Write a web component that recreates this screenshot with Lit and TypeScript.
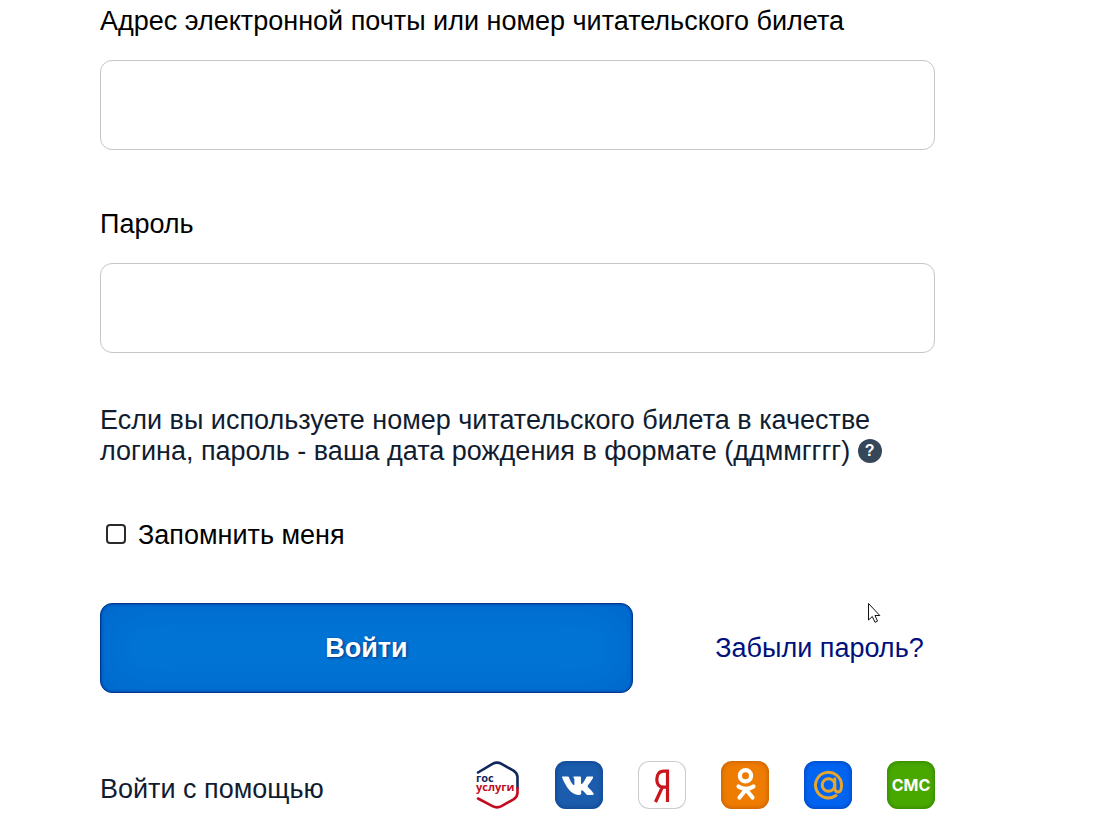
import { LitElement, html, css, svg } from "lit";
import { customElement } from "lit/decorators.js";

const providers = [
  {
    name: "Госуслуги",
    tone: "plain",
    mark: svg`
      <g fill="none" stroke-width="2.6" stroke-linecap="round" stroke-linejoin="round">
        <path stroke="#10265c" d="M6 11.5 L20.5 2.8 Q25 .5 29.5 2.8 L41.5 9.7 Q45.3 12 45.5 16 V27"/>
        <path stroke="#c40b1e" d="M45.5 27 V32 Q45.3 36 41.5 38.3 L29.5 45.2 Q25 47.5 20.5 45.2 L6 37.5"/>
      </g>
      <text class="gos-text" x="4" y="21" fill="#10265c">гос</text>
      <text class="gos-text" x="4" y="30" fill="#c40b1e">услуги</text>`,
  },
  {
    name: "ВКонтакте",
    tone: "vk",
    mark: svg`<path fill="#fff" d="M7.5 15.5h5.2c.7 0 1 .3 1.3 1.100 1.500 4 3.800 7.500 4.800 7.500.4 0 .6-.2.6-1.200v-4.200c-.1-1.900-1.200-2.100-1.200-2.700 0-.3.3-.6.700-.6h6.200c.6 0 .9.300.9 1v5.700c0 .6.300.9.500.9.400 0 .7-.3 1.400-1 2.100-2.400 3.100-5.300 3.300-5.700.200-.6.600-.9 1.300-.9h4.500c1 0 1.300.5 1 1.300-.6 2.100-5.100 7.700-5.100 7.700-.4.6-.5.900 0 1.500.4.500 4.500 4.400 5.600 6.300.5.900 0 1.700-.9 1.700h-5c-.9 0-1.300-.5-2-1.300-1.600-1.900-2.900-3.300-3.700-3.300-.5 0-.7.300-.7 1.100v2.200c0 1-.4 1.300-2.500 1.300-3.800 0-7.800-2.300-10.700-6.500-4.300-6-5.700-10.500-6-11.300-.1-.4 0-.6.500-.6z"/>`,
  },
  {
    name: "Яндекс",
    tone: "yandex",
    mark: svg`<path fill="none" stroke="#c9151b" stroke-width="3.200" d="M29.500 41V10.200h-3.700c-4.700 0-7 3.400-7 8.100 0 4.800 2.200 7.900 6.800 7.900h3.900M24.200 26.500L17.500 41"/>`,
  },
  {
    name: "Одноклассники",
    tone: "ok",
    mark: svg`
      <g fill="none" stroke="#fff" stroke-width="4.200" stroke-linecap="round" stroke-linejoin="round">
        <circle cx="24.500" cy="14.700" r="5.600"/>
        <path d="M17.500 25.500q7.500 5 15 0M25 28.500l-6.500 8M25 28.500l6.500 8"/>
      </g>`,
  },
  {
    name: "Mail.ru",
    tone: "mail",
    mark: svg`
      <g fill="none" stroke="#e5a62f" stroke-width="3" stroke-linecap="round">
        <circle cx="24.500" cy="24" r="6.300"/>
        <path d="M30.800 17.800v8.700q0 4.500 3.400 4.500c2.400 0 3.300-3.300 3.300-7a13 12.800 0 1 0-5.500 10.600"/>
      </g>`,
  },
  {
    name: "СМС",
    tone: "sms",
    mark: svg`<text class="sms-text" x="24" y="30" text-anchor="middle" fill="#fff">СМС</text>`,
  },
];

@customElement("app-root")
export class AppRoot extends LitElement {
  static styles = css`
    :host {
      display: block;
      min-height: 100vh;
      background: #fff;
      color: #000;
      font: 27px/31px "Liberation Sans", Arial, sans-serif;
    }
    * { box-sizing: border-box; }
    .page { padding: 6px 184px 24px 100px; }
    .field { display: flex; flex-direction: column; gap: 23px; margin-bottom: 59px; }
    .field.last { margin-bottom: 52px; }
    .input {
      width: 100%;
      height: 90px;
      padding: 0 24px;
      border: 1px solid #c6c6c6;
      border-radius: 12px;
      background: #fff;
      font: inherit;
    }
    .hint { margin: 0; color: #101c30; }
    .help {
      width: 24px;
      height: 24px;
      padding: 0;
      border: 0;
      border-radius: 50%;
      background: #36475a;
      color: #fff;
      font: bold 16px/24px "Liberation Sans", Arial, sans-serif;
      vertical-align: 4px;
    }
    .remember {
      display: flex;
      align-items: flex-start;
      gap: 12px;
      margin: 53px 0 52px;
      padding-left: 6px;
    }
    .check {
      appearance: none;
      width: 20px;
      height: 20px;
      margin: 4px 0 0;
      border: 2px solid #2b2b2b;
      border-radius: 4px;
      background: #fff;
    }
    .check:checked { background: #0073d4; }
    .actions {
      display: grid;
      grid-template-columns: 533fr 231fr;
      gap: 71px;
      align-items: center;
      justify-items: center;
    }
    .submit {
      width: 100%;
      height: 90px;
      border: 1px solid #00378f;
      border-radius: 12px;
      background: #0076d6;
      box-shadow: inset 0 0 3px #002f90, inset 0 0 50px #0064ca;
      color: #fff;
      font: inherit;
      font-weight: bold;
      text-shadow: 1px 1px 3px #00347c;
    }
    .forgot { color: #00107c; text-decoration: none; white-space: nowrap; }
    .social {
      display: flex;
      align-items: center;
      justify-content: space-between;
      margin-top: 68px;
    }
    .social-title { padding-top: 8px; color: #101c30; }
    .providers { display: flex; gap: 35px; }
    .provider {
      width: 48px;
      height: 48px;
      padding: 0;
      border: 0;
      border-radius: 11px;
      background: none;
    }
    .mark { display: block; width: 48px; height: 48px; overflow: visible; }
    .gos-text { font: bold 11px "Open Sans", "Noto Sans", sans-serif; }
    .sms-text { font: bold 16px Inter, "Open Sans", sans-serif; }
    .vk { background: #1c5cac; box-shadow: inset 0 0 5px #073b83; }
    .yandex { background: #fff; box-shadow: inset 0 0 0 1px #ccc; }
    .ok { background: #ee7c00; box-shadow: inset 0 0 5px #b85500; }
    .mail { background: #0064f0; box-shadow: inset 0 0 5px #003aa8; }
    .sms { background: #49a800; box-shadow: inset 0 0 5px #2c7600; }
    .cursor { position: absolute; left: 867px; top: 602px; width: 14px; height: 22px; pointer-events: none; }
  `;

  render() {
    return html`
      <form class="page" @submit=${(e: Event) => e.preventDefault()}>
        <div class="field">
          <label for="login">Адрес электронной почты или номер читательского билета</label>
          <input class="input" id="login" type="text" autocomplete="username" />
        </div>
        <div class="field last">
          <label for="password">Пароль</label>
          <input class="input" id="password" type="password" autocomplete="current-password" />
        </div>
        <p class="hint">
          Если вы используете номер читательского билета в качестве логина, пароль - ваша дата рождения в формате (ддммгггг)
          <button class="help" type="button">?</button>
        </p>
        <div class="remember">
          <input class="check" id="remember" type="checkbox" />
          <label for="remember">Запомнить меня</label>
        </div>
        <div class="actions">
          <button class="submit" type="submit">Войти</button>
          <a class="forgot" href="#">Забыли пароль?</a>
        </div>
        <div class="social">
          <span class="social-title">Войти с помощью</span>
          <div class="providers">
            ${providers.map(
              (p) => html`<button class="provider ${p.tone}" type="button" aria-label=${p.name}>
                <svg class="mark" viewBox="0 0 48 48" aria-hidden="true">${p.mark}</svg>
              </button>`,
            )}
          </div>
        </div>
      </form>
      <svg class="cursor" viewBox="0 0 14 22" aria-hidden="true">
        <path d="M1.500 1.500v16.500l3.800-3.500 2.700 5.800 2.500-1.200-2.500-5.600h4.800z" fill="#fff" stroke="#111" />
      </svg>
    `;
  }
}
